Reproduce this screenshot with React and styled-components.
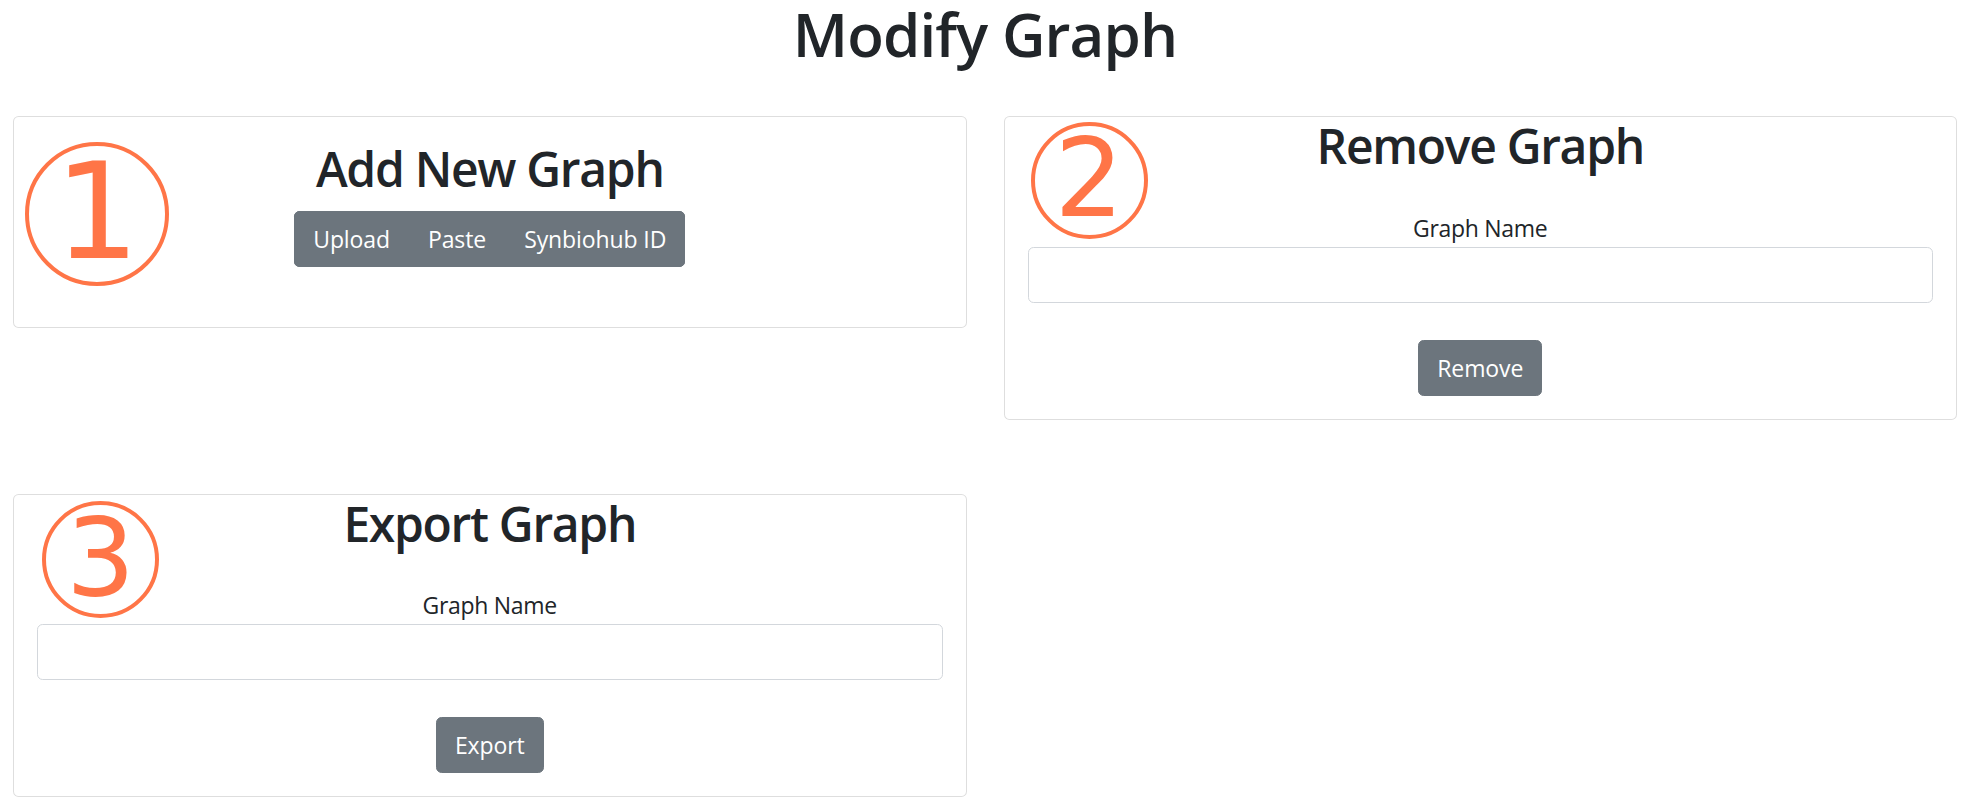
import React from "react";
import styled, { createGlobalStyle } from "styled-components";

const GlobalStyle = createGlobalStyle`
  html, body { margin: 0; padding: 0; background: #fff; }
  body {
    font-family: "Open Sans", "Noto Sans", sans-serif;
    color: #212529;
    font-size: 24px;
    line-height: 1.5;
  }
  * { box-sizing: border-box; }
`;

const Page = styled.main`
  padding: 0 16px 0 13px;
`;

const PageTitle = styled.h1`
  margin: 0 0 48px;
  font-size: 60px;
  line-height: 68px;
  font-weight: 600;
  letter-spacing: -0.9px;
  text-align: center;
`;

const Grid = styled.div`
  display: grid;
  grid-template-columns: 1fr 1fr;
  column-gap: 37px;
  row-gap: 74px;
  align-items: start;
`;

const Card = styled.section`
  position: relative;
  display: flex;
  flex-direction: column;
  align-items: center;
  border: 1px solid rgba(0, 0, 0, 0.13);
  border-radius: 5.6px;
  background: #fff;
  padding: ${(p) => (p.$spacious ? "23px 23px 60px" : "0 23px 23px")};
`;

const CardTitle = styled.h2`
  margin: 0 0 ${(p) => (p.$gap ? "13px" : "0")};
  font-size: 48px;
  line-height: 57.6px;
  font-weight: 600;
  letter-spacing: -1.3px;
  text-align: center;
`;

const Step = styled.span`
  position: absolute;
  left: ${(p) => p.$x}px;
  top: ${(p) => p.$y}px;
  width: ${(p) => p.$size}px;
  height: ${(p) => p.$size}px;
  border: 4px solid #ff7547;
  border-radius: 50%;
  display: flex;
  align-items: center;
  justify-content: center;
  color: #ff7547;
  font-family: "DejaVu Sans", sans-serif;
  font-size: ${(p) => p.$size * 0.93}px;
  line-height: 1;
  padding-bottom: ${(p) => p.$size * 0.02}px;
`;

const ButtonGroup = styled.div`
  display: inline-flex;
  background: #6c757d;
  border-radius: 5.6px;
`;

const Button = styled.button`
  font-family: inherit;
  font-size: 23px;
  letter-spacing: -0.1px;
  line-height: 36px;
  color: #fff;
  background: #6c757d;
  border: 1px solid #6c757d;
  border-radius: ${(p) => (p.$grouped ? "0" : "5.6px")};
  padding: 9px 18px;
  cursor: pointer;
  &:first-child { border-radius: ${(p) => (p.$grouped ? "5.6px 0 0 5.6px" : "5.6px")}; }
  &:last-child { border-radius: ${(p) => (p.$grouped ? "0 5.6px 5.6px 0" : "5.6px")}; }
`;

const Label = styled.label`
  display: block;
  margin-top: 35px;
  font-size: 23px;
  letter-spacing: -0.3px;
  line-height: 36px;
  text-align: center;
`;

const Input = styled.input`
  display: block;
  width: 100%;
  height: 56px;
  margin: 1px 0 37px;
  padding: 9px 18px;
  font-family: inherit;
  font-size: 24px;
  border: 1px solid #d3d7dc;
  border-radius: 5.6px;
  background: #fff;
  outline: none;
`;

function NameForm({ id, action }) {
  return (
    <>
      <Label htmlFor={id}>Graph Name</Label>
      <Input id={id} type="text" />
      <Button type="button">{action}</Button>
    </>
  );
}

export default function App() {
  return (
    <>
      <GlobalStyle />
      <Page>
        <PageTitle>Modify Graph</PageTitle>
        <Grid>
          <Card $spacious>
            <Step $x={11} $y={25} $size={144}>1</Step>
            <CardTitle $gap>Add New Graph</CardTitle>
            <ButtonGroup>
              <Button $grouped type="button">Upload</Button>
              <Button $grouped type="button">Paste</Button>
              <Button $grouped type="button">Synbiohub ID</Button>
            </ButtonGroup>
          </Card>
          <Card>
            <Step $x={26} $y={5} $size={117}>2</Step>
            <CardTitle>Remove Graph</CardTitle>
            <NameForm id="remove-name" action="Remove" />
          </Card>
          <Card>
            <Step $x={28} $y={6} $size={117}>3</Step>
            <CardTitle>Export Graph</CardTitle>
            <NameForm id="export-name" action="Export" />
          </Card>
        </Grid>
      </Page>
    </>
  );
}
